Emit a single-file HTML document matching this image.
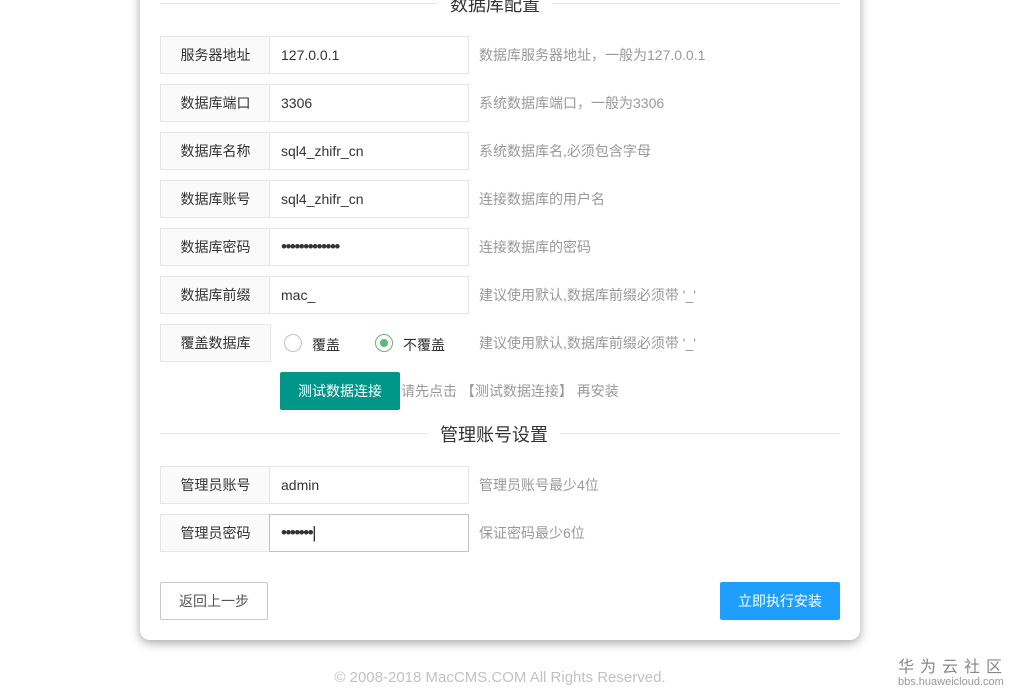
<!DOCTYPE html>
<html><head><meta charset="utf-8"><style>
body{margin:0;width:1020px;height:694px;background:#fff;position:relative;overflow:hidden;font-family:"Liberation Sans","Noto Sans CJK SC",sans-serif;}
.card{position:absolute;left:140px;top:-20px;width:720px;height:660px;background:#fff;border-radius:10px;box-shadow:0 3px 10px rgba(0,0,0,.35);}
.a{position:absolute;}
.lbl{position:absolute;left:160px;width:109px;height:36px;border:1px solid #e6e6e6;background:#fafafa;font-size:14px;color:#333;text-align:center;line-height:36px;}
.inp{position:absolute;left:269px;height:36px;border:1px solid #e6e6e6;background:#fff;font-size:14px;color:#333;line-height:36px;padding-left:11px;width:187px;}
.hint{position:absolute;left:479px;font-size:14px;color:#999;line-height:38px;}
.line{position:absolute;height:1px;background:#e6e6e6;}
.title{position:absolute;font-size:18px;color:#333;background:#fff;padding:0 12px;}
.radio{position:absolute;width:16px;height:16px;border:1px solid #c2c2c2;border-radius:50%;background:#fff;}
.pw{font-size:17px;letter-spacing:-1.5px}
</style></head><body>
<div class="card"></div>
<div class="line" style="left:160px;top:3px;width:680px"></div>
<div class="title" style="left:438px;top:-9px">数据库配置</div>

<div class="lbl" style="top:36px">服务器地址</div><div class="inp" style="top:36px">127.0.0.1</div><div class="hint" style="top:36px">数据库服务器地址，一般为127.0.0.1</div>
<div class="lbl" style="top:84px">数据库端口</div><div class="inp" style="top:84px">3306</div><div class="hint" style="top:84px">系统数据库端口，一般为3306</div>
<div class="lbl" style="top:132px">数据库名称</div><div class="inp" style="top:132px">sql4_zhifr_cn</div><div class="hint" style="top:132px">系统数据库名,必须包含字母</div>
<div class="lbl" style="top:180px">数据库账号</div><div class="inp" style="top:180px">sql4_zhifr_cn</div><div class="hint" style="top:180px">连接数据库的用户名</div>
<div class="lbl" style="top:228px">数据库密码</div><div class="inp pw" style="top:228px">•••••••••••••</div><div class="hint" style="top:228px">连接数据库的密码</div>
<div class="lbl" style="top:276px">数据库前缀</div><div class="inp" style="top:276px">mac_</div><div class="hint" style="top:276px">建议使用默认,数据库前缀必须带 '_'</div>
<div class="lbl" style="top:324px">覆盖数据库</div>
<div class="radio" style="left:284px;top:334px"></div><div class="a" style="left:312px;top:335px;font-size:14px;color:#333">覆盖</div>
<div class="radio" style="left:375px;top:334px;border-color:#5FB878"></div><div class="a" style="left:380px;top:339px;width:8px;height:8px;border-radius:50%;background:#5FB878"></div>
<div class="a" style="left:403px;top:335px;font-size:14px;color:#333">不覆盖</div>
<div class="hint" style="top:324px">建议使用默认,数据库前缀必须带 '_'</div>
<div class="a" style="left:280px;top:372px;width:120px;height:38px;background:#009688;color:#fff;font-size:14px;line-height:38px;text-align:center;border-radius:2px">测试数据连接</div>
<div class="a" style="left:401px;top:381px;font-size:14px;color:#999">请先点击 【测试数据连接】 再安装</div>

<div class="line" style="left:160px;top:433px;width:680px"></div>
<div class="title" style="left:428px;top:421px">管理账号设置</div>

<div class="lbl" style="top:466px">管理员账号</div><div class="inp" style="top:466px">admin</div><div class="hint" style="top:466px">管理员账号最少4位</div>
<div class="lbl" style="top:514px">管理员密码</div><div class="inp pw" style="top:514px;border-color:#c2c2c2">•••••••|</div><div class="hint" style="top:514px">保证密码最少6位</div>

<div class="a" style="left:160px;top:582px;width:106px;height:36px;border:1px solid #c9c9c9;font-size:14px;color:#555;line-height:36px;text-align:center;border-radius:2px">返回上一步</div>
<div class="a" style="left:720px;top:582px;width:120px;height:38px;background:#1E9FFF;color:#fff;font-size:14px;line-height:38px;text-align:center;border-radius:2px">立即执行安装</div>

<div class="a" style="left:0;width:1000px;text-align:center;top:669px;font-size:15px;color:#c2c2c2">© 2008-2018 MacCMS.COM All Rights Reserved.</div>
<div class="a" style="left:898px;top:653px;font-size:16px;color:#888;letter-spacing:6px">华为云社区</div>
<div class="a" style="left:898px;top:676px;font-size:11px;color:#999">bbs.huaweicloud.com</div>
</body></html>
